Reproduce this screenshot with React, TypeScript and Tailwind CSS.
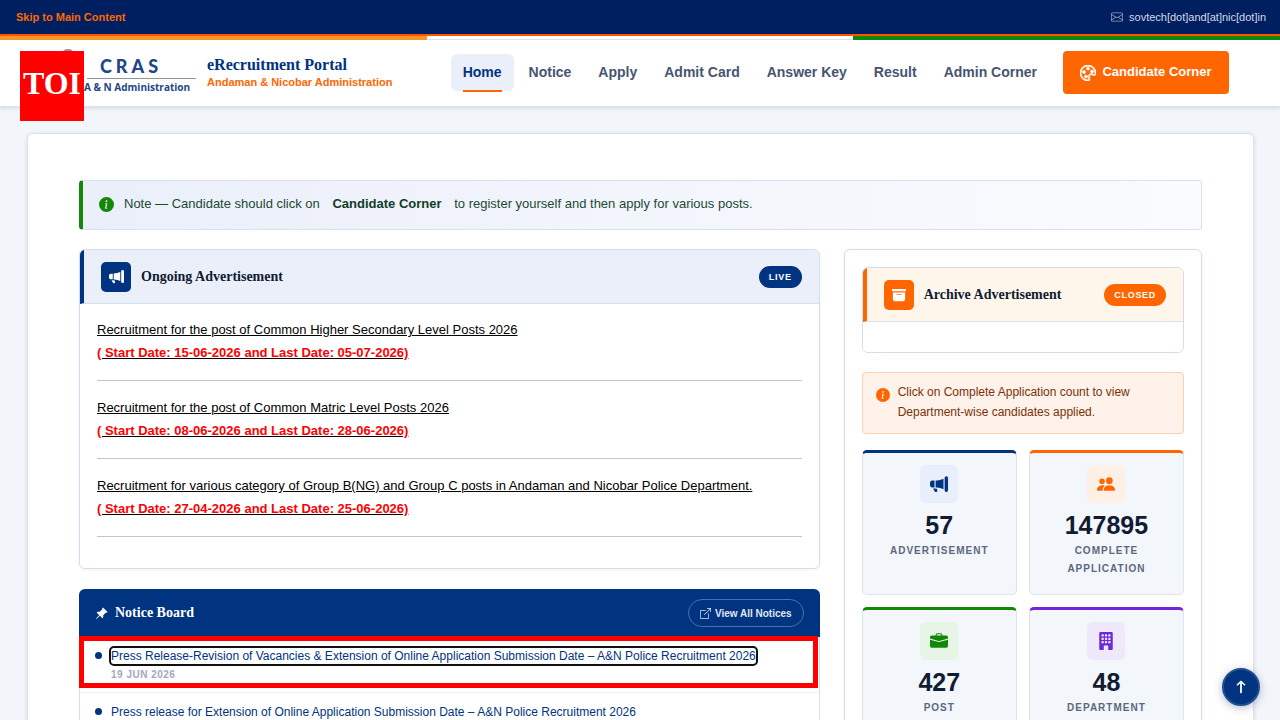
import type { ReactNode } from "react";
import {
  BsArchiveFill,
  BsArrowUp,
  BsBoxArrowUpRight,
  BsBriefcaseFill,
  BsBuildingFill,
  BsEnvelope,
  BsInfoCircleFill,
  BsMegaphoneFill,
  BsPalette,
  BsPeopleFill,
  BsPinAngleFill,
} from "react-icons/bs";

const navItems = ["Home", "Notice", "Apply", "Admit Card", "Answer Key", "Result", "Admin Corner"];

const advertisements = [
  {
    title: "Recruitment for the post of Common Higher Secondary Level Posts 2026",
    dates: "( Start Date: 15-06-2026 and Last Date: 05-07-2026)",
  },
  {
    title: "Recruitment for the post of Common Matric Level Posts 2026",
    dates: "( Start Date: 08-06-2026 and Last Date: 28-06-2026)",
  },
  {
    title: "Recruitment for various category of Group B(NG) and Group C posts in Andaman and Nicobar Police Department.",
    dates: "( Start Date: 27-04-2026 and Last Date: 25-06-2026)",
  },
];

function TopBar() {
  return (
    <div className="flex h-9 items-center justify-between border-b-2 border-[#ff5a00] bg-[#001f60] pr-[14px] pl-4">
      <a href="#main" className="text-[11px] font-bold text-[#ff6600]">
        Skip to Main Content
      </a>
      <span className="flex items-center gap-[6px] text-[11px] text-[#d3d9e6]">
        <BsEnvelope className="size-3 opacity-70" />
        sovtech[dot]and[at]nic[dot]in
      </span>
    </div>
  );
}

function Brand() {
  return (
    <div className="relative flex items-center pl-[84px]">
      <div className="absolute top-[-1px] left-[63px] h-1 w-[10px] rounded-t bg-[#9a9a9a]" />
      <div className="absolute top-[1px] left-5 flex h-[70px] w-16 items-center justify-center bg-[#ff0000] pb-[6px] font-['Liberation_Serif',serif] text-[32px] font-bold text-white">
        TOI
      </div>
      <div className="w-28 font-['Lato',sans-serif] text-[#1f4788]">
        <div className="pt-1 pl-4 text-lg leading-6 font-black tracking-[4px]">CRAS</div>
        <div className="ml-[3px] border-t border-[#8f949c]" />
        <div className="font-['Open_Sans',sans-serif] text-[10px] leading-4 font-bold whitespace-nowrap">A &amp; N Administration</div>
      </div>
      <div className="ml-[11px] whitespace-nowrap">
        <div className="font-['Liberation_Serif',serif] text-base leading-[18px] font-bold text-[#003380]">
          eRecruitment Portal
        </div>
        <div className="text-[11px] leading-4 font-bold text-[#ff6600]">Andaman &amp; Nicobar Administration</div>
      </div>
    </div>
  );
}

function Header() {
  return (
    <header className="relative z-10 bg-white shadow-[0_1px_4px_rgba(30,50,90,0.16)]">
      <div className="grid h-1 grid-cols-3">
        <div className="bg-[#ff9429]" />
        <div className="border-b border-[#dfe1e5] bg-white" />
        <div className="bg-[#138808]" />
      </div>
      <div className="flex items-center border-b border-[#dde2ea] pt-[10px] pr-[51px] pb-[11px]">
        <Brand />
        <nav className="ml-auto flex items-center gap-[3px]">
          {navItems.map((item, i) => (
            <a
              key={item}
              href="#main"
              className={
                i === 0
                  ? "relative rounded-md bg-[#ebeffa] px-3 py-2 text-sm leading-[21px] font-bold whitespace-nowrap text-[#003380]"
                  : "rounded-md px-3 py-2 text-sm leading-[21px] font-bold whitespace-nowrap text-[#475470]"
              }
            >
              {item}
              {i === 0 && <span className="absolute inset-x-3 bottom-[-1px] h-[2px] bg-[#ff6600]" />}
            </a>
          ))}
        </nav>
        <button className="ml-[14px] flex h-[43px] w-[166px] items-center justify-center gap-[6px] rounded bg-[#ff6600] pb-px text-[13px] font-bold whitespace-nowrap text-white">
          <BsPalette className="mt-px size-4 stroke-[0.8]" />
          Candidate Corner
        </button>
      </div>
    </header>
  );
}

function CardHeader({ icon, title, badge, tone }: { icon: ReactNode; title: string; badge: string; tone: "blue" | "orange" }) {
  const blue = tone === "blue";
  return (
    <div
      className={
        blue
          ? "flex h-[54px] items-center border-b border-l-4 border-b-[#d6ddec] border-l-[#003380] bg-[#ebeffa] px-[17px]"
          : "flex h-[54px] items-center border-b border-l-4 border-b-[#d9dfeb] border-l-[#ff6600] bg-[#fff6eb] px-[17px]"
      }
    >
      <span
        className={
          blue
            ? "flex size-[30px] items-center justify-center rounded-[5px] bg-[#003380] text-white"
            : "flex size-[30px] items-center justify-center rounded-[5px] bg-[#ff6600] text-white"
        }
      >
        {icon}
      </span>
      <h2 className="ml-[10px] font-['Liberation_Serif',serif] text-sm font-bold text-[#101c33]">{title}</h2>
      <span
        className={
          blue
            ? "ml-auto rounded-full bg-[#003380] px-[10px] text-[9px] leading-[22px] font-bold tracking-[0.7px] text-white"
            : "ml-auto rounded-full bg-[#ff6600] px-[10px] text-[9px] leading-[22px] font-bold tracking-[0.7px] text-white"
        }
      >
        {badge}
      </span>
    </div>
  );
}

function OngoingCard() {
  return (
    <section className="overflow-hidden rounded-md border border-[#d5dced] bg-white shadow-[0_1px_3px_rgba(0,40,100,0.06)]">
      <CardHeader icon={<BsMegaphoneFill className="size-[15px]" />} title="Ongoing Advertisement" badge="LIVE" tone="blue" />
      <div className="px-[17px] py-[15px]">
        {advertisements.map((ad) => (
          <div key={ad.title} className="mb-4 border-b border-[#c4c6c9] pb-4 text-[13px]">
            <a href="#main" className="block leading-[22px] text-black underline">
              {ad.title}
            </a>
            <a href="#main" className="block leading-[23px] font-bold text-[#ff0000] underline decoration-black">
              {ad.dates}
            </a>
          </div>
        ))}
      </div>
    </section>
  );
}

function NoticeBoard() {
  return (
    <section className="mt-5 rounded-md border border-[#d5dced] bg-white">
      <div className="-mx-px -mt-px flex h-12 items-center rounded-t-md bg-[#003380] px-4 text-white">
        <BsPinAngleFill className="size-[13px]" />
        <h2 className="ml-[7px] pb-px font-['Liberation_Serif',serif] text-sm font-bold">Notice Board</h2>
        <a
          href="#main"
          className="ml-auto flex h-7 items-center gap-1 rounded-full border border-[#4c70a6] px-[11px] text-[10px] font-bold text-[#e0e7f2]"
        >
          <BsBoxArrowUpRight className="size-[11px]" />
          View All Notices
        </a>
      </div>
      <ul>
        <NoticeItem
          highlighted
          title="Press Release-Revision of Vacancies & Extension of Online Application Submission Date – A&N Police Recruitment 2026"
          date="19 JUN 2026"
        />
        <NoticeItem title="Press release for Extension of Online Application Submission Date – A&N Police Recruitment 2026" />
      </ul>
    </section>
  );
}

function NoticeItem({ title, date, highlighted = false }: { title: string; date?: string; highlighted?: boolean }) {
  return (
    <li className="relative flex gap-[9px] border-b border-[#eef1f7] pt-[9px] pr-4 pb-2 pl-[15px]">
      {highlighted && <span className="pointer-events-none absolute -top-px right-px bottom-1 -left-px border-[5px] border-[#ff0000]" />}
      <span className="mt-[6px] size-[7px] shrink-0 rounded-full bg-[#003380]" />
      <div>
        <a href="#main" className="block text-xs leading-5 text-[#003380]">
          <span className={highlighted ? "rounded-[3px] py-px outline-2 outline-[#101010]" : ""}>{title}</span>
        </a>
        {date && <div className="text-[10px] leading-[18px] font-bold tracking-[0.5px] text-[#a0a9bb]">{date}</div>}
      </div>
    </li>
  );
}

function Stat({ icon, value, label, border, tint }: { icon: ReactNode; value: string; label: string; border: string; tint: string }) {
  return (
    <div className={`rounded-[5px] border border-t-3 border-[#dde4ed] bg-[#f3f6fa] px-5 pt-3 pb-4 text-center ${border}`}>
      <div className={`mx-auto flex size-[38px] items-center justify-center rounded-md ${tint}`}>{icon}</div>
      <div className="mt-2 text-[25px] leading-7 font-bold text-[#101c33]">{value}</div>
      <div className="mt-[3px] text-[10px] leading-[18px] font-bold tracking-[1px] text-[#5b6880]">{label}</div>
    </div>
  );
}

function Sidebar() {
  return (
    <aside className="rounded-md border border-[#d5dced] bg-white p-[17px] shadow-[0_1px_3px_rgba(0,40,100,0.06)]">
      <section className="overflow-hidden rounded-md border border-[#d5dced]">
        <CardHeader icon={<BsArchiveFill className="size-[14px]" />} title="Archive Advertisement" badge="CLOSED" tone="orange" />
        <div className="h-[30px] bg-white" />
      </section>
      <div className="mt-[19px] flex gap-2 rounded border border-[#fdd0ae] bg-[#fff2ea] px-[13px] pt-[9px] pb-[11px] text-xs leading-5 text-[#7a3108]">
        <BsInfoCircleFill className="mt-[6px] size-[14px] shrink-0 text-[#ff6600]" />
        <p>Click on Complete Application count to view Department-wise candidates applied.</p>
      </div>
      <div className="mt-4 grid grid-cols-2 gap-3">
        <Stat icon={<BsMegaphoneFill className="size-[18px] text-[#003380]" />} value="57" label="ADVERTISEMENT" border="border-t-[#003380]" tint="bg-[#e8eefb]" />
        <Stat icon={<BsPeopleFill className="size-[18px] text-[#ff6600]" />} value="147895" label="COMPLETE APPLICATION" border="border-t-[#ff6600]" tint="bg-[#fff0e6]" />
        <Stat icon={<BsBriefcaseFill className="size-[18px] text-[#138808]" />} value="427" label="POST" border="border-t-[#138808]" tint="bg-[#e7f5e7]" />
        <Stat icon={<BsBuildingFill className="size-[18px] text-[#6d28d9]" />} value="48" label="DEPARTMENT" border="border-t-[#7424de]" tint="bg-[#efe8fd]" />
      </div>
    </aside>
  );
}

export default function App() {
  return (
    <div className="h-screen overflow-y-auto bg-[#f2f5fa] font-['Liberation_Sans',Arial,sans-serif] [scrollbar-width:none]">
      <TopBar />
      <Header />
      <main
        id="main"
        className="mt-[26px] mr-[26px] mb-8 ml-[27px] rounded-md border border-[#dbe1eb] bg-white px-[51px] pt-[46px] pb-12 shadow-[0_1px_4px_rgba(30,50,90,0.14)]"
      >
        <div className="flex h-[50px] items-center rounded border border-l-4 border-[#d9e0ef] border-l-[#138808] bg-linear-to-r from-[#ebeffa] to-[#fafbfe] pb-[2px] pl-4 text-[13px] text-[#1c4a33]">
          <BsInfoCircleFill className="mt-px size-[15px] text-[#138808]" />
          <p className="ml-[10px]">
            Note — Candidate should click on{" "}
            <a href="#main" className="mx-[9px] font-bold text-[#0f3d26]">
              Candidate Corner
            </a>{" "}
            to register yourself and then apply for various posts.
          </p>
        </div>
        <div className="mt-[19px] grid grid-cols-3 gap-6">
          <div className="col-span-2">
            <OngoingCard />
            <NoticeBoard />
          </div>
          <Sidebar />
        </div>
      </main>
      <button
        aria-label="Back to top"
        className="fixed right-5 bottom-[14px] z-20 flex size-[38px] items-center justify-center rounded-full border-2 border-[#24508f] bg-[#003380] text-white shadow-[0_2px_8px_rgba(0,40,100,0.3)]"
      >
        <BsArrowUp className="size-[14px] stroke-1" />
      </button>
    </div>
  );
}
